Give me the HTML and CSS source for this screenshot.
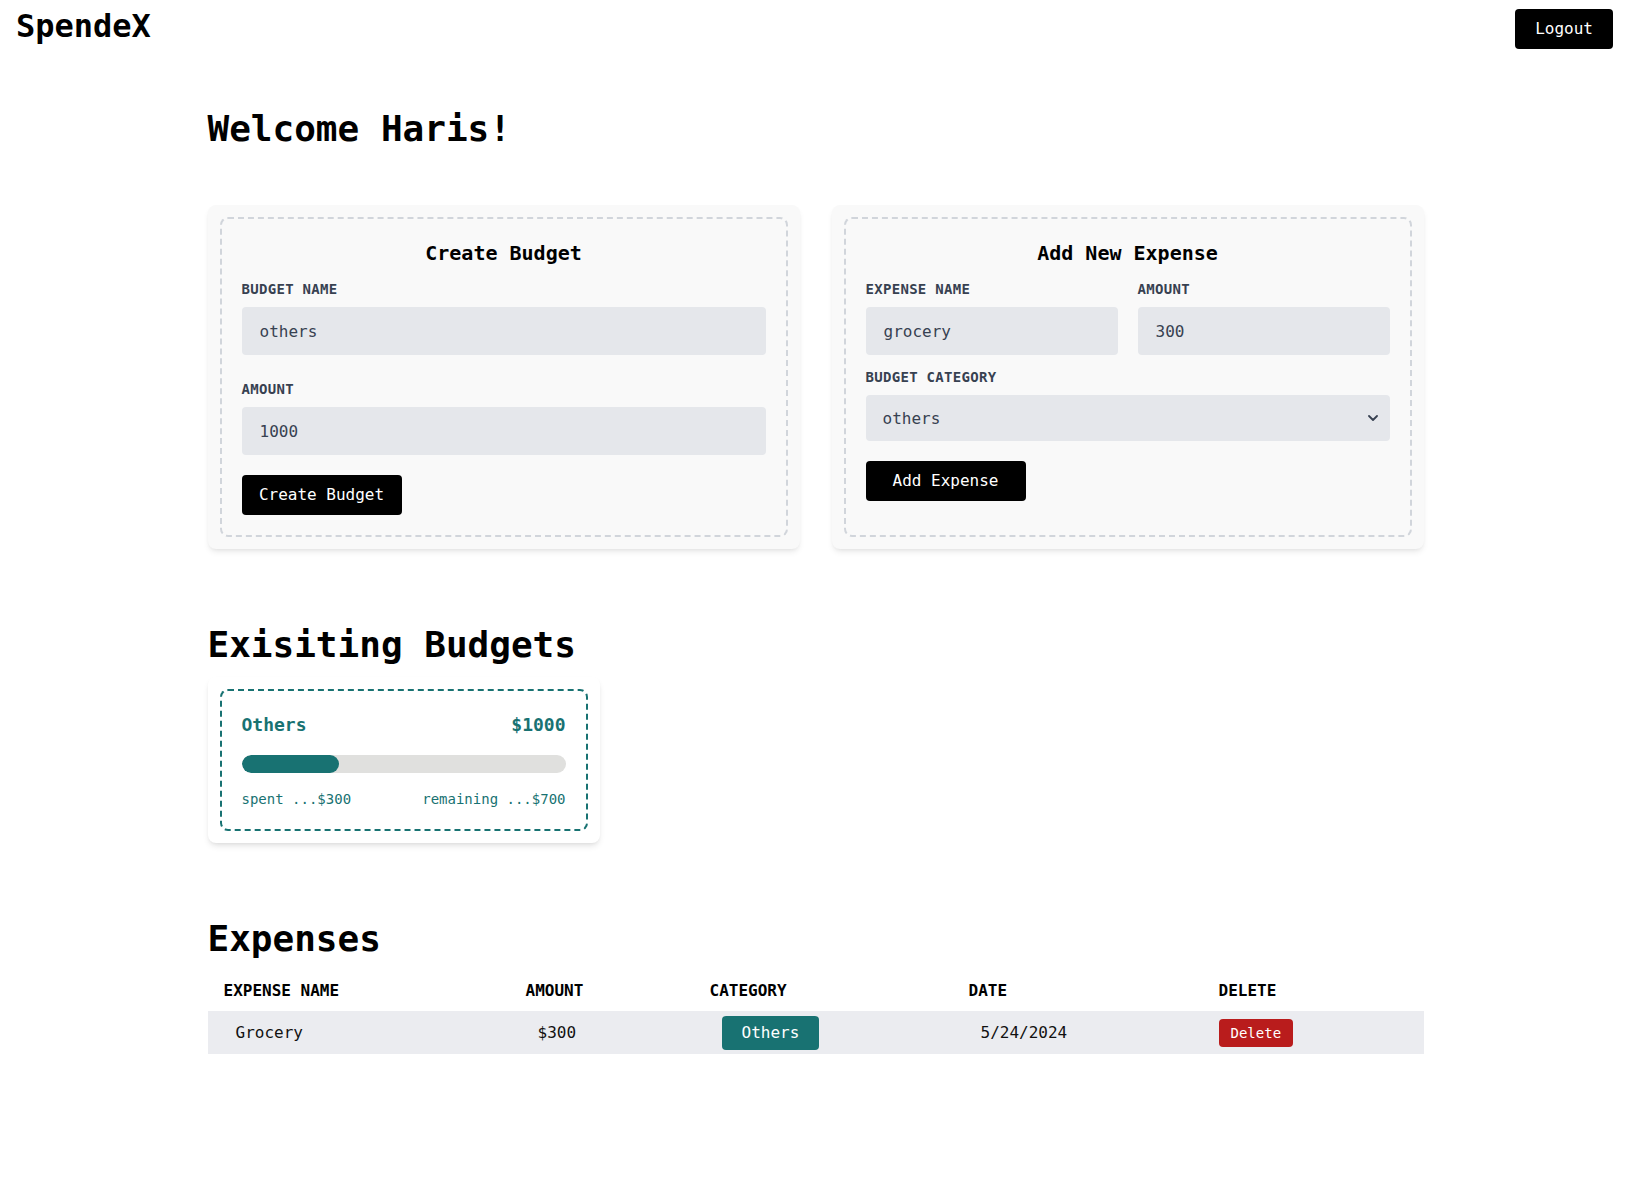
FILE: index.html
```html
<!DOCTYPE html>
<html lang="en">
<head>
<meta charset="utf-8">
<title>SpendeX</title>
<link rel="stylesheet" href="styles.css">
</head>
<body>
<header class="topbar">
  <h1 class="logo">SpendeX</h1>
  <button class="btn btn-logout" type="button">Logout</button>
</header>
<main class="page">
  <h1 class="welcome">Welcome Haris!</h1>

  <section class="forms">
    <div class="card">
      <form class="card-inner">
        <h2 class="card-title">Create Budget</h2>
        <label class="label">Budget Name</label>
        <input class="field" type="text" value="others">
        <label class="label label-gap">Amount</label>
        <input class="field" type="text" value="1000">
        <button class="btn btn-submit" type="button">Create Budget</button>
      </form>
    </div>
    <div class="card">
      <form class="card-inner">
        <h2 class="card-title">Add New Expense</h2>
        <div class="two-col">
          <div class="col">
            <label class="label">Expense Name</label>
            <input class="field" type="text" value="grocery">
          </div>
          <div class="col">
            <label class="label">Amount</label>
            <input class="field" type="text" value="300">
          </div>
        </div>
        <label class="label label-gap-sm">Budget Category</label>
        <div class="select-wrap">
          <select class="field select">
            <option>others</option>
          </select>
          <svg class="chevron" width="10" height="6" viewBox="0 0 10 6" aria-hidden="true"><path d="M1 1l4 4 4-4" fill="none" stroke="#374151" stroke-width="1.8" stroke-linecap="round" stroke-linejoin="round"/></svg>
        </div>
        <button class="btn btn-submit btn-submit-sm" type="button">Add Expense</button>
      </form>
    </div>
  </section>

  <h2 class="section-title">Exisiting Budgets</h2>
  <section class="budgets">
    <div class="budget-card">
      <div class="budget-inner">
        <div class="budget-head">
          <span>Others</span>
          <span>$1000</span>
        </div>
        <div class="progress"><div class="progress-fill" style="width:30%"></div></div>
        <div class="budget-foot">
          <span>spent ...$300</span>
          <span>remaining ...$700</span>
        </div>
      </div>
    </div>
  </section>

  <h2 class="section-title">Expenses</h2>
  <table class="table">
    <colgroup>
      <col class="c1"><col class="c2"><col class="c3"><col class="c4"><col class="c5">
    </colgroup>
    <thead>
      <tr>
        <th>Expense Name</th>
        <th>Amount</th>
        <th>Category</th>
        <th>Date</th>
        <th>Delete</th>
      </tr>
    </thead>
    <tbody>
      <tr class="row">
        <td>Grocery</td>
        <td>$300</td>
        <td><span class="badge">Others</span></td>
        <td>5/24/2024</td>
        <td class="td-del"><button class="btn-delete" type="button">Delete</button></td>
      </tr>
    </tbody>
  </table>
</main>
</body>
</html>
```

FILE: styles.css
```css
* { box-sizing: border-box; }

body {
  margin: 0;
  font-family: "DejaVu Sans Mono", "Liberation Mono", monospace;
  color: #000;
  background: #fff;
}

.topbar {
  display: flex;
  justify-content: space-between;
  align-items: flex-start;
  padding: 8px 18px 0 16px;
}

.logo {
  margin: 0;
  font-size: 32px;
  font-weight: 700;
  line-height: 37px;
}

.btn {
  font-family: inherit;
  border: none;
  background: #000;
  color: #fff;
  border-radius: 4px;
  cursor: pointer;
}

.btn-logout {
  margin-top: 1px;
  padding: 8px 20px;
  font-size: 16px;
  line-height: 24px;
}

.page {
  width: 1216px;
  margin: 0 auto;
}

.welcome {
  margin: 60px 0 56px;
  font-size: 36px;
  line-height: 40px;
  font-weight: 700;
}

.forms {
  display: grid;
  grid-template-columns: 1fr 1fr;
  gap: 32px;
}

.card {
  background: #f9f9f9;
  border-radius: 8px;
  padding: 12px;
  box-shadow: 0 4px 6px -1px rgba(0,0,0,0.08), 0 2px 4px -2px rgba(0,0,0,0.08);
}

.card-inner {
  height: 100%;
  border: 2px dashed #d1d5db;
  border-radius: 8px;
  padding: 20px;
  display: flex;
  flex-direction: column;
  align-items: flex-start;
}

.card-title {
  align-self: stretch;
  text-align: center;
  margin: 0 0 12px;
  font-size: 20px;
  line-height: 28px;
  font-weight: 700;
}

.label {
  display: block;
  font-size: 14px;
  line-height: 20px;
  font-weight: 700;
  text-transform: uppercase;
  letter-spacing: 0.3px;
  color: #374151;
  margin-bottom: 8px;
}

.label-gap { margin-top: 24px; }
.label-gap-sm { margin-top: 12px; }

.field {
  display: block;
  width: 100%;
  height: 48px;
  border: none;
  border-radius: 4px;
  background: #e5e7eb;
  padding: 0 18px;
  font-family: inherit;
  font-size: 16px;
  color: #374151;
  outline: none;
}

.two-col {
  align-self: stretch;
  display: grid;
  grid-template-columns: 1fr 1fr;
  gap: 20px;
}

.select-wrap {
  position: relative;
  align-self: stretch;
}

.select {
  height: 46px;
  appearance: none;
  -webkit-appearance: none;
  padding: 0 17px;
}

.chevron {
  position: absolute;
  right: 12px;
  top: 20px;
  pointer-events: none;
}

.btn-submit {
  margin-top: 20px;
  width: 160px;
  height: 40px;
  font-size: 16px;
  line-height: 24px;
  text-align: center;
}

.section-title {
  margin: 76px 0 12px;
  font-size: 36px;
  line-height: 40px;
  font-weight: 700;
}

.budgets {
  display: grid;
  grid-template-columns: repeat(3, 1fr);
  gap: 20px;
}

.budget-card {
  background: #fff;
  border-radius: 8px;
  padding: 12px;
  box-shadow: 0 4px 6px -1px rgba(0,0,0,0.1), 0 2px 4px -2px rgba(0,0,0,0.08);
}

.budget-inner {
  border: 2px dashed #187272;
  border-radius: 8px;
  padding: 20px;
  color: #187272;
}

.budget-head {
  display: flex;
  justify-content: space-between;
  font-size: 18px;
  line-height: 28px;
  font-weight: 700;
}

.progress {
  margin: 16px 0;
  height: 18px;
  background: #e0e0de;
  border-radius: 9999px;
  overflow: hidden;
}

.progress-fill {
  height: 100%;
  background: #187272;
  border-radius: 9999px;
}

.budget-foot {
  display: flex;
  justify-content: space-between;
  font-size: 14px;
  line-height: 20px;
}

.table {
  width: 100%;
  table-layout: fixed;
  border-collapse: collapse;
  font-size: 16px;
  line-height: 24px;
}

.c1 { width: 302px; }
.c2 { width: 184px; }
.c3 { width: 259px; }
.c4 { width: 250px; }
.c5 { width: 221px; }

.table th {
  text-align: left;
  text-transform: uppercase;
  font-weight: 700;
  padding: 8px 16px;
}

.row { background: #ebecf0; height: 43px; }

.table td {
  padding: 0 28px;
  vertical-align: middle;
  color: #111;
}

.table td.td-del { padding: 0 16px; }

.badge {
  display: inline-block;
  background: #187272;
  color: #fff;
  padding: 5px 20px;
  border-radius: 4px;
  font-size: 16px;
  line-height: 24px;
  vertical-align: middle;
}

.btn-delete {
  display: inline-block;
  font-family: inherit;
  border: none;
  background: #b91c1c;
  color: #fff;
  padding: 4px 12px;
  border-radius: 4px;
  font-size: 14px;
  line-height: 20px;
  vertical-align: middle;
}
```
